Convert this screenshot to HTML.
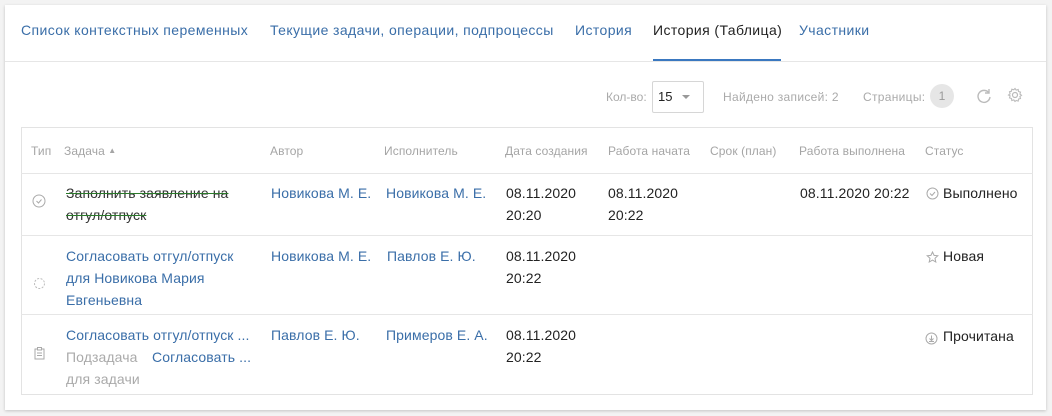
<!DOCTYPE html>
<html><head><meta charset="utf-8"><style>
*{margin:0;padding:0;box-sizing:border-box}
body{width:1052px;height:416px;background:#f3f3f3;font-family:"Liberation Sans","DejaVu Sans",sans-serif;position:relative;overflow:hidden}
.card{position:absolute;left:5px;top:5px;width:1041px;height:405px;background:#fff;box-shadow:0 1px 3px rgba(0,0,0,.2)}
.a{position:absolute;white-space:nowrap}
.tab{font-size:14px;color:#3a6ea8;top:22px;letter-spacing:0.4px}
.h{font-size:12px;color:#a5a5a5;top:144px;letter-spacing:0.1px}
.t{font-size:14px;line-height:22px;letter-spacing:0.1px}
.l{color:#3a6ea8}
.k{color:#222}
.g{color:#aaa}
.hl{position:absolute;left:21px;width:1012px;height:1px;background:#e6e6e6}
</style></head><body>
<div class="card"></div>
<div class="a tab" style="left:21px">Список контекстных переменных</div>
<div class="a tab" style="left:270px">Текущие задачи, операции, подпроцессы</div>
<div class="a tab" style="left:575px">История</div>
<div class="a tab" style="left:653px;color:#222">История (Таблица)</div>
<div class="a tab" style="left:799px">Участники</div>
<div style="position:absolute;left:5px;top:61px;width:1041px;height:1px;background:#e6e6e6"></div>
<div style="position:absolute;left:653px;top:59px;width:128px;height:2px;background:#3a78c0"></div>

<div class="a" style="left:606px;top:90px;font-size:12px;color:#aaa">Кол-во:</div>
<div style="position:absolute;left:652px;top:81px;width:52px;height:32px;border:1px solid #d6d6d6;border-radius:2px"></div>
<div class="a" style="left:658px;top:89px;font-size:13px;color:#222">15</div>
<div style="position:absolute;left:682px;top:95px;border-left:4px solid transparent;border-right:4px solid transparent;border-top:4px solid #999"></div>
<div class="a" style="left:723px;top:90px;font-size:12px;color:#aaa;letter-spacing:0.3px">Найдено записей: 2</div>
<div class="a" style="left:863px;top:90px;font-size:12px;color:#aaa;letter-spacing:0.3px">Страницы:</div>
<div style="position:absolute;left:930px;top:84px;width:24px;height:24px;border-radius:50%;background:#e6e6e6;font-size:12px;color:#999;text-align:center;line-height:24px">1</div>
<svg style="position:absolute;left:975px;top:87px" width="18" height="18" viewBox="0 0 18 18"><path d="M14 6A6 6 0 1 0 15 10" fill="none" stroke="#bbb" stroke-width="1.4"/><path d="M14 2v4h-4" fill="none" stroke="#bbb" stroke-width="1.4"/></svg>
<svg style="position:absolute;left:1007px;top:87px" width="16" height="16" viewBox="0 0 16 16"><circle cx="8" cy="8" r="2.5" fill="none" stroke="#bbb" stroke-width="1.2"/><path d="M8 1.5l1.2 1.6 2-.6.3 2 2 .6-.6 2 1.6 1.2-1.6 1.2.6 2-2 .6-.3 2-2-.6L8 14.5l-1.2-1.6-2 .6-.3-2-2-.6.6-2L1.5 8l1.6-1.2-.6-2 2-.6.3-2 2 .6z" fill="none" stroke="#bbb" stroke-width="1.1"/></svg>

<div style="position:absolute;left:21px;top:127px;width:1012px;height:268px;border:1px solid #e3e3e3"></div>
<div class="a h" style="left:31px">Тип</div>
<div class="a h" style="left:64px">Задача <span style="font-size:8px;position:relative;top:-2px">▲</span></div>
<div class="a h" style="left:270px">Автор</div>
<div class="a h" style="left:384px">Исполнитель</div>
<div class="a h" style="left:505px">Дата создания</div>
<div class="a h" style="left:608px">Работа начата</div>
<div class="a h" style="left:710px">Срок (план)</div>
<div class="a h" style="left:799px">Работа выполнена</div>
<div class="a h" style="left:925px">Статус</div>
<div class="hl" style="top:173px"></div>
<div class="hl" style="top:235px"></div>
<div class="hl" style="top:314px"></div>

<!-- row1 -->
<svg style="position:absolute;left:32px;top:194px" width="14" height="14"><circle cx="7" cy="7" r="6" fill="none" stroke="#aaa"/><path d="M4.5 7l2 2 3-3.5" fill="none" stroke="#aaa"/></svg>
<div class="a t" style="left:66px;top:182px;color:#333;text-decoration:line-through;text-decoration-color:#2a7a2a">Заполнить заявление на<br>отгул/отпуск</div>
<div class="a t l" style="left:271px;top:182px">Новикова М. Е.</div>
<div class="a t l" style="left:386px;top:182px">Новикова М. Е.</div>
<div class="a t k" style="left:506px;top:182px">08.11.2020<br>20:20</div>
<div class="a t k" style="left:608px;top:182px">08.11.2020<br>20:22</div>
<div class="a t k" style="left:800px;top:182px">08.11.2020 20:22</div>
<svg style="position:absolute;left:926px;top:187px" width="13" height="13"><circle cx="6.5" cy="6.5" r="5.5" fill="none" stroke="#aaa"/><path d="M4 6.5l2 2 3-3.5" fill="none" stroke="#aaa"/></svg>
<div class="a t k" style="left:943px;top:182px">Выполнено</div>

<!-- row2 -->
<svg style="position:absolute;left:33px;top:277px" width="13" height="13"><circle cx="6.5" cy="6.5" r="5" fill="none" stroke="#bbb" stroke-dasharray="2 1.5"/></svg>
<div class="a t l" style="left:66px;top:245px">Согласовать отгул/отпуск<br>для Новикова Мария<br>Евгеньевна</div>
<div class="a t l" style="left:271px;top:245px">Новикова М. Е.</div>
<div class="a t l" style="left:387px;top:245px">Павлов Е. Ю.</div>
<div class="a t k" style="left:506px;top:245px">08.11.2020<br>20:22</div>
<svg style="position:absolute;left:926px;top:251px" width="13" height="13" viewBox="0 0 13 13"><path d="M6.5 1l1.6 3.4 3.7.4-2.8 2.5.8 3.7-3.3-1.9-3.3 1.9.8-3.7L1.2 4.8l3.7-.4z" fill="none" stroke="#aaa"/></svg>
<div class="a t k" style="left:943px;top:245px">Новая</div>

<!-- row3 -->
<svg style="position:absolute;left:34px;top:347px" width="11" height="13" viewBox="0 0 11 13"><rect x="1" y="2" width="9" height="10" fill="none" stroke="#aaa"/><rect x="3.5" y="0.5" width="4" height="2.5" fill="#fff" stroke="#aaa"/><path d="M3 6h5M3 8.5h5" stroke="#aaa"/></svg>
<div class="a t l" style="left:66px;top:324px">Согласовать отгул/отпуск ...</div>
<div class="a t g" style="left:66px;top:346px">Подзадача</div>
<div class="a t l" style="left:152px;top:346px">Согласовать ...</div>
<div class="a t g" style="left:66px;top:368px">для задачи</div>
<div class="a t l" style="left:271px;top:324px">Павлов Е. Ю.</div>
<div class="a t l" style="left:386px;top:324px">Примеров Е. А.</div>
<div class="a t k" style="left:506px;top:324px">08.11.2020<br>20:22</div>
<svg style="position:absolute;left:925px;top:332px" width="13" height="13"><circle cx="6.5" cy="6.5" r="5.5" fill="none" stroke="#aaa"/><path d="M6.5 3.5v5M4.5 6.5l2 2 2-2M4 9.5h5" fill="none" stroke="#aaa"/></svg>
<div class="a t k" style="left:943px;top:325px">Прочитана</div>
</body></html>
